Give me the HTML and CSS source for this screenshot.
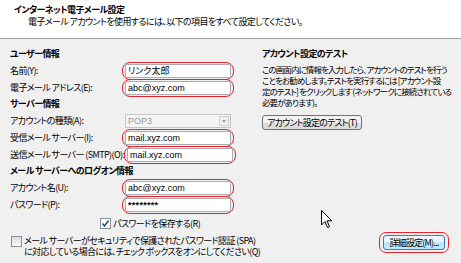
FILE: index.html
```html
<!DOCTYPE html>
<html lang="ja">
<head>
    <meta charset="UTF-8">
    <meta name="viewport" content="width=device-width, initial-scale=1.0">
    <title>インターネット電子メール設定</title>
    <link rel="stylesheet" href="styles.css">
</head>
<body>
    <div class="header">
        <div class="title">インターネット電子メール設定</div>
        <div class="subtitle">電子メール アカウントを使用するには、以下の項目をすべて設定してください。</div>
    </div>

    <div class="content">
        <div class="left">
            <div class="section">ユーザー情報</div>
            <div class="row">
                <label>名前(Y):</label>
                <span class="mark"><span class="field">リンク太郎</span></span>
            </div>
            <div class="row">
                <label>電子メール アドレス(E):</label>
                <span class="mark"><span class="field">abc@xyz.com</span></span>
            </div>

            <div class="section">サーバー情報</div>
            <div class="row">
                <label>アカウントの種類(A):</label>
                <span class="plain">
                    <span class="select">POP3<span class="drop"></span></span>
                </span>
            </div>
            <div class="row">
                <label>受信メール サーバー(I):</label>
                <span class="mark"><span class="field">mail.xyz.com</span></span>
            </div>
            <div class="row">
                <label>送信メール サーバー (SMTP)(O):</label>
                <span class="mark"><span class="field">mail.xyz.com</span></span>
            </div>

            <div class="section">メール サーバーへのログオン情報</div>
            <div class="row">
                <label>アカウント名(U):</label>
                <span class="mark"><span class="field">abc@xyz.com</span></span>
            </div>
            <div class="row">
                <label>パスワード(P):</label>
                <span class="mark"><span class="field pw">********</span></span>
            </div>

            <div class="save">
                <span class="check on">
                    <svg width="9" height="9" viewBox="0 0 9 9"><path d="M1.5 4.5 L3.5 7 L7.5 1.5" fill="none" stroke="#2a4f9a" stroke-width="1.6"/></svg>
                </span>
                <span>パスワードを保存する(R)</span>
            </div>

            <div class="spa">
                <span class="check"></span>
                <span>メール サーバーがセキュリティで保護されたパスワード認証 (SPA)<br>に対応している場合には、チェック ボックスをオンにしてください(Q)</span>
            </div>
        </div>

        <div class="right">
            <div class="section">アカウント設定のテスト</div>
            <p class="note">この画面内に情報を入力したら、アカウントのテストを行う<br>ことをお勧めします。テストを実行するには [アカウント設<br>定のテスト] をクリックします (ネットワークに接続されている<br>必要があります)。</p>
            <button class="btn">アカウント設定のテスト(T)</button>

            <div class="spacer"></div>

            <div class="bottom">
                <span class="ring"><button class="btn hot">詳細設定(M)...</button></span>
            </div>
        </div>
    </div>

    <svg class="cursor" width="12" height="19" viewBox="0 0 12 19">
        <path d="M0.5 0.5 L0.5 15 L4 11.5 L6.5 17.5 L8.5 16.6 L6 10.8 L10.8 10.8 Z" fill="#fff" stroke="#000" stroke-width="1"/>
    </svg>
</body>
</html>
```

FILE: styles.css
```css
body {
    margin: 0;
    width: 461px;
    height: 263px;
    overflow: hidden;
    background-color: #f0f0f0;
    font-family: 'Noto Sans CJK JP', 'Noto Sans', sans-serif;
    font-size: 9px;
    letter-spacing: -0.6px;
    font-feature-settings: "palt";
    color: #000;
    position: relative;
}
.header {
    background-color: #ffffff;
    height: 39px;
    border-bottom: 1px solid #a0a0a0;
    box-sizing: border-box;
    padding: 4px 0 0 14px;
}
.title {
    font-weight: bold;
    line-height: 12px;
}
.subtitle {
    padding-left: 14px;
    line-height: 12px;
}
.content {
    display: flex;
    padding: 7px 0 0 10px;
    height: 216px;
    box-sizing: border-box;
}
.left {
    width: 224px;
    flex-shrink: 0;
}
.section {
    font-weight: bold;
    height: 16px;
    line-height: 16px;
}
.row {
    display: flex;
    align-items: center;
    height: 17px;
}
.row label {
    width: 114px;
    white-space: nowrap;
}
.mark, .plain {
    display: inline-flex;
    border: 1.5px solid #e8232c;
    border-radius: 8px;
    padding: 1px 2px;
}
.plain {
    border-color: transparent;
}
.field {
    width: 100px;
    height: 12px;
    line-height: 12px;
    background: #fff;
    border: 1px solid #abadb3;
    padding: 0 2px;
    font-family: 'Liberation Sans', 'Noto Sans CJK JP', sans-serif;
    font-size: 9px;
    letter-spacing: 0;
}
.pw {
    font-weight: bold;
    letter-spacing: 0.3px;
}
.select {
    position: relative;
    width: 100px;
    height: 12px;
    line-height: 12px;
    background: #f4f4f4;
    border: 1px solid #c6c6c6;
    padding: 0 2px;
    color: #9a9a9a;
    font-family: 'Liberation Sans', sans-serif;
    letter-spacing: 0;
}
.drop {
    position: absolute;
    right: 1px;
    top: 1px;
    width: 10px;
    height: 10px;
    background: #f0f0f0;
    border: 1px solid #d0d0d0;
    box-sizing: border-box;
}
.drop::after {
    content: "";
    position: absolute;
    left: 2px;
    top: 3px;
    border-left: 2.5px solid transparent;
    border-right: 2.5px solid transparent;
    border-top: 3px solid #a0a0a0;
}
.check {
    display: inline-flex;
    align-items: center;
    justify-content: center;
    width: 9px;
    height: 9px;
    border: 1px solid #8e8f8f;
    background: linear-gradient(#dcdcdc, #fafafa);
    margin-right: 2px;
    flex-shrink: 0;
}
.check.on {
    background: #fff;
}
.save {
    display: flex;
    align-items: center;
    margin: 3px 0 0 90px;
    height: 14px;
}
.spa {
    display: flex;
    align-items: flex-start;
    margin-top: 5px;
    margin-left: 1px;
    line-height: 11px;
    white-space: nowrap;
}
.spa .check {
    margin-top: 1px;
}
.right {
    flex: 1;
    min-width: 0;
    display: flex;
    flex-direction: column;
    padding-left: 28px;
}
.note {
    margin: 2px 0 0;
    font-size: 8.5px;
    line-height: 11px;
    letter-spacing: -0.9px;
    white-space: nowrap;
}
.btn {
    align-self: flex-start;
    font-family: inherit;
    font-size: 9px;
    letter-spacing: -0.8px;
    font-feature-settings: "palt";
    white-space: nowrap;
    height: 15px;
    padding: 0 4px;
    line-height: 12px;
    margin-top: 7px;
    border: 1px solid #707070;
    border-radius: 3px;
    background: linear-gradient(#f2f2f2 50%, #dddddd 50%);
    color: #000;
}
.spacer {
    flex: 1;
}
.bottom {
    display: flex;
    justify-content: flex-end;
    padding: 0 12px 2px 0;
}
.ring {
    border: 1.5px solid #e8232c;
    border-radius: 7px;
    padding: 2px 3px;
    display: inline-flex;
}
.btn.hot {
    margin: 0;
    width: 62px;
    padding: 0 3px;
    background: linear-gradient(#eaf6fd 50%, #bee6fd 50%);
    border-color: #3c7fb1;
}
.cursor {
    position: absolute;
    left: 321px;
    top: 210px;
}
```
